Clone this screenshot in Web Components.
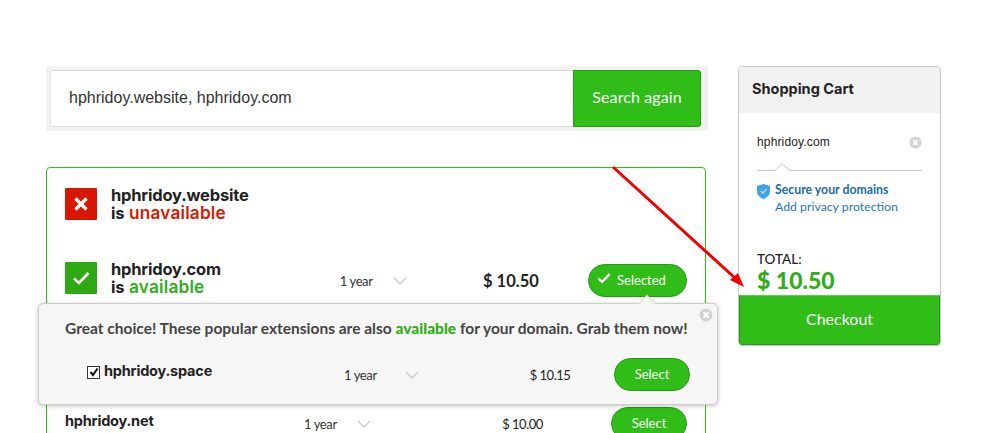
<!DOCTYPE html>
<html>
<head>
<meta charset="utf-8">
<title>Domain search</title>
<style>
  html, body { margin: 0; height: 433px; overflow: hidden; background: #fff; }
  body { font-family: Lato, "Liberation Sans", sans-serif; color: #222; }
</style>
</head>
<body>
<domain-page></domain-page>

<script>
  const check = '<svg width="16" height="14" viewBox="0 0 16 14"><path d="M1.5 7.5 L5.8 11.5 L14.5 2.5" fill="none" stroke="#fff" stroke-width="2.6"/></svg>'
  const chevron = '<svg width="14" height="8" viewBox="0 0 14 8"><path d="M1 1 L7 7 L13 1" fill="none" stroke="#ccc" stroke-width="1.4"/></svg>'
  const closeIcon = '<svg width="14" height="14" viewBox="0 0 14 14"><circle cx="7" cy="7" r="6.5" fill="#d2d2d2"/><path d="M4.5 4.5 L9.5 9.5 M9.5 4.5 L4.5 9.5" stroke="#fff" stroke-width="2"/></svg>'

  class SearchBar extends HTMLElement {
    constructor() {
      super()
      this.attachShadow({ mode: 'open' }).innerHTML = `
        <style>
          :host { display: flex; flex: none; height: 57px; padding: 4px 7px 4px 4px; background: #f1f1f1; border-radius: 3px; }
          .field { flex: 1; display: flex; align-items: center; padding: 0 0 2px 18px; background: #fff; border-top: 1px solid #d8d8d8; border-bottom: 1px solid #d8d8d8; border-left: 1px solid #e2e2e2; border-radius: 3px 0 0 3px; font: 16px "Liberation Sans", sans-serif; color: #333; }
          button { width: 128px; padding: 0 0 4px; border: 1px solid #239a12; border-radius: 0 3px 3px 0; background: #30bd18; color: #fff; font: 16px Lato, sans-serif; letter-spacing: .1px; }
        </style>
        <div class="field"><slot></slot></div>
        <button>Search again</button>`
    }
  }

  class PillButton extends HTMLElement {
    constructor() {
      super()
      const icon = this.hasAttribute('checked') ? check : ''
      this.attachShadow({ mode: 'open' }).innerHTML = `
        <style>
          :host { display: flex; align-items: center; justify-content: center; gap: 6px; width: 74px; height: 29px; padding-bottom: 2px; box-sizing: content-box; border: 1px solid #239a12; border-radius: 17px; background: #30bd18; color: #fff; font-size: 13px; flex: none; }
          :host([checked]) { width: 85px; padding-right: 12px; }
          svg { width: 14px; height: 12px; margin-top: -3px; }
        </style>
        ${icon}<slot></slot>`
    }
  }

  class StatusRow extends HTMLElement {
    constructor() {
      super()
      const ok = this.getAttribute('state') === 'available'
      const glyph = ok
        ? '<path d="M9 16.5 L14 21 L23.5 11" fill="none" stroke="#fff" stroke-width="2.6"/>'
        : '<path d="M10.5 10.5 L21.5 21.5 M21.5 10.5 L10.5 21.5" fill="none" stroke="#fff" stroke-width="3.4"/>'
      this.attachShadow({ mode: 'open' }).innerHTML = `
        <style>
          :host { display: flex; align-items: flex-start; gap: 14px; }
          svg { flex: none; }
          .text { font: 700 16.5px/18px Inter, sans-serif; letter-spacing: -.2px; margin-top: -2px; color: #222; white-space: nowrap; }
          b { font-size: 17.2px; font-weight: 600; letter-spacing: .2px; margin-left: 1px; color: ${ok ? '#30ad18' : '#d61a00'}; }
          .rest { flex: 1; }
        </style>
        <svg width="32" height="32" viewBox="0 0 32 32"><rect width="32" height="32" rx="1" fill="${ok ? '#2fa815' : '#d91600'}"/>${glyph}</svg>
        <div class="text"><slot></slot><br>is <b>${this.getAttribute('state')}</b></div>
        <div class="rest"><slot name="rest"></slot></div>`
    }
  }

  class OfferLine extends HTMLElement {
    constructor() {
      super()
      this.attachShadow({ mode: 'open' }).innerHTML = `
        <style>
          :host { display: flex; align-items: center; font-size: 13px; color: #333; }
          .term { display: flex; align-items: center; gap: var(--term-gap, 20px); width: var(--term-width, 143px); letter-spacing: -.4px; padding-top: 1px; }
          .price { flex: 1; text-align: center; padding-left: var(--price-shift, 0); font: var(--price-weight, 400) var(--price-size, 13px) Lato, sans-serif; letter-spacing: var(--price-spacing, -.5px); color: #222; }
        </style>
        <div class="term"><span>1 year</span>${chevron}</div>
        <div class="price"><slot></slot></div>
        <slot name="action"></slot>`
    }
  }

  class ExtensionPopup extends HTMLElement {
    constructor() {
      super()
      this.attachShadow({ mode: 'open' }).innerHTML = `
        <style>
          :host { display: block; position: absolute; left: 38px; top: 303px; width: 680px; height: 102px; box-sizing: border-box; padding: 15px 27px 15px 26px; background: #f6f6f6; border: 1px solid #ccc; border-radius: 5px; box-shadow: 0 1px 4px rgba(0,0,0,.25); }
          .close { position: absolute; right: 4px; top: 2px; }
          .tip { position: absolute; left: 599px; top: -9px; width: 17px; height: 17px; background: #f6f6f6; border-left: 1px solid #ccc; border-top: 1px solid #ccc; transform: rotate(45deg) scale(.72); }
          p { margin: 0; font-size: 15.5px; font-weight: 700; color: #444; white-space: nowrap; }
          p b { color: #30ad18; }
          .row { display: flex; align-items: center; margin-top: 21px; padding-left: 22px; }
          .name { display: flex; align-items: center; gap: 4px; width: 257px; margin-top: -8px; font: 700 14.5px Inter, sans-serif; letter-spacing: -.2px; color: #222; }
          .box { width: 11px; height: 11px; border: 1px solid #333; background: #fff; display: flex; align-items: center; justify-content: center; margin-top: 3px; }
          offer-line { flex: 1; --price-shift: 56px; --term-gap: 28px; }
        </style>
        <div class="tip"></div>
        <span class="close">${closeIcon}</span>
        <p>Great choice! These popular extensions are also <b>available</b> for your domain. Grab them now!</p>
        <div class="row">
          <div class="name"><span class="box"><svg width="10" height="10" viewBox="0 0 10 10"><path d="M1.5 5 L4 8 L8.5 1.5" fill="none" stroke="#111" stroke-width="2"/></svg></span>hphridoy.space</div>
          <offer-line style="--term-width:86px"><span>$ 10.15</span><pill-button slot="action">Select</pill-button></offer-line>
        </div>`
    }
  }

  class CartPanel extends HTMLElement {
    constructor() {
      super()
      this.attachShadow({ mode: 'open' }).innerHTML = `
        <style>
          :host { display: flex; flex: none; flex-direction: column; width: 203px; height: 280px; box-sizing: border-box; border: 1px solid #c8c8c8; border-radius: 4px; background: #fff; overflow: hidden; }
          h2 { margin: 0; height: 46px; padding-left: 13px; background: #f1f1f1; font: 700 14.5px/44px Inter, sans-serif; color: #222; }
          .body { flex: 1; padding: 0 18px; position: relative; }
          .item { display: flex; justify-content: space-between; align-items: center; margin-top: 22px; font: 12px "Liberation Sans", sans-serif; letter-spacing: .15px; color: #222; }
          .item svg { width: 13px; height: 13px; }
          .rule { display: block; margin-top: 13px; }
          .secure { display: flex; gap: 5px; margin-top: 10px; font-size: 12.3px; line-height: 17px; color: #1f75b8; }
          .secure b { display: block; color: #1a6aa8; }
          .secure svg { margin-top: 3px; flex: none; }
          .total { position: absolute; left: 18px; top: 138px; font-size: 13.5px; font-weight: 500; color: #222; line-height: 16px; }
          .sum { font-size: 23px; font-weight: 900; color: #30ad18; line-height: 26px; }
          button { height: 50px; padding: 0 0 3px; border: 1px solid #239a12; border-top-color: #5fce4c; border-radius: 0 0 3px 3px; background: #30bd18; color: #fff; font: 16px Lato, sans-serif; }
        </style>
        <h2>Shopping Cart</h2>
        <div class="body">
          <div class="item"><span>hphridoy.com</span>${closeIcon}</div>
          <svg class="rule" width="165" height="9" viewBox="0 0 165 9"><path d="M0 8.5 H18 L25 1.5 L33 8.5 H165" fill="none" stroke="#c9c9c9"/></svg>
          <div class="secure">
            <svg width="13" height="15" viewBox="0 0 13 15"><path d="M6.5 0 L13 2 V7.5 C13 11 10 13.5 6.5 15 C3 13.5 0 11 0 7.5 V2 Z" fill="#3ea3e8"/><path d="M3.8 7 L5.8 9.2 L9.4 5" fill="none" stroke="#bfe2f8" stroke-width="1.3"/></svg>
            <div><b>Secure your domains</b>Add privacy protection</div>
          </div>
          <div class="total">TOTAL:<div class="sum">$ 10.50</div></div>
        </div>
        <button>Checkout</button>`
    }
  }

  class DomainPage extends HTMLElement {
    constructor() {
      super()
      this.attachShadow({ mode: 'open' }).innerHTML = `
        <style>
          :host { display: flex; position: relative; gap: 30px; height: 433px; box-sizing: border-box; padding: 66px 0 0 46px; overflow: hidden; }
          .main { flex: none; width: 662px; display: flex; flex-direction: column; gap: 36px; }
          .results { flex: none; width: 660px; height: 300px; box-sizing: border-box; padding: 20px 18px 0; border: 1px solid #30bd18; border-radius: 4px; }
          status-row + status-row { margin-top: 40px; }
          .selected { --price-size: 16.5px; --price-weight: 700; --price-spacing: 0; margin: 2px 0 0 105px; --term-width: 92px; --price-shift: 2px; }
          .net { display: flex; align-items: center; margin-top: 110px; }
          .net strong { width: 239px; font: 700 14.5px Inter, sans-serif; letter-spacing: -.2px; color: #222; margin-top: -6px; }
          .net offer-line { flex: 1; --term-width: 70px; --price-shift: 60px; }
          .arrow { position: absolute; left: 0; top: 0; pointer-events: none; }
        </style>
        <div class="main">
          <search-bar>hphridoy.website, hphridoy.com</search-bar>
          <div class="results">
            <status-row state="unavailable">hphridoy.website</status-row>
            <status-row state="available">hphridoy.com
              <offer-line class="selected" slot="rest"><span>$ 10.50</span><pill-button slot="action" checked>Selected</pill-button></offer-line>
            </status-row>
            <div class="net">
              <strong>hphridoy.net</strong>
              <offer-line><span>$ 10.00</span><pill-button slot="action">Select</pill-button></offer-line>
            </div>
          </div>
        </div>
        <cart-panel></cart-panel>
        <extension-popup></extension-popup>
        <svg class="arrow" width="997" height="433" viewBox="0 0 997 433">
          <path d="M613 167 L735 278" stroke="#f40000" stroke-width="3" fill="none"/>
          <path d="M744 287 L730 280 L738 273 Z" fill="#f40000"/>
        </svg>`
    }
  }

  customElements.define('search-bar', SearchBar)
  customElements.define('pill-button', PillButton)
  customElements.define('status-row', StatusRow)
  customElements.define('offer-line', OfferLine)
  customElements.define('extension-popup', ExtensionPopup)
  customElements.define('cart-panel', CartPanel)
  customElements.define('domain-page', DomainPage)
</script>
</body>
</html>
